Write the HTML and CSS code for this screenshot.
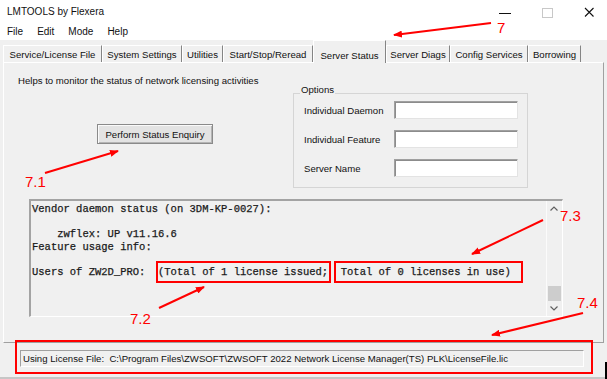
FILE: index.html
```html
<!DOCTYPE html>
<html lang="en">
<head>
    <meta charset="UTF-8">
    <title>LMTOOLS by Flexera</title>
    <link rel="stylesheet" href="styles.css">
</head>
<body>
    <!-- title bar -->
    <div class="titlebar">
        <span class="title">LMTOOLS by Flexera</span>
        <div class="controls">
            <svg width="42" height="22" viewBox="0 0 42 22"><line x1="15" y1="13.5" x2="27" y2="13.5" stroke="#111" stroke-width="1"/></svg>
            <svg width="42" height="22" viewBox="0 0 42 22"><rect x="16.5" y="8.5" width="10" height="9" fill="none" stroke="#c8c8c8" stroke-width="1"/></svg>
            <svg width="42" height="22" viewBox="0 0 42 22"><path d="M17 8 L25.5 16.5 M25.5 8 L17 16.5" stroke="#111" stroke-width="1.1"/></svg>
        </div>
    </div>

    <div class="menubar">
        <span>File</span>
        <span>Edit</span>
        <span>Mode</span>
        <span>Help</span>
    </div>

    <div class="tabs">
        <span class="tab">Service/License File</span>
        <span class="tab">System Settings</span>
        <span class="tab">Utilities</span>
        <span class="tab">Start/Stop/Reread</span>
        <span class="tab active">Server Status</span>
        <span class="tab">Server Diags</span>
        <span class="tab">Config Services</span>
        <span class="tab">Borrowing</span>
    </div>

    <div class="page">
        <div class="upper">
            <div class="left">
                <p class="intro">Helps to monitor the status of network licensing activities</p>
                <button class="btn">Perform Status Enquiry</button>
            </div>
            <fieldset class="options">
                <legend>Options</legend>
                <div class="fields">
                    <label>Individual Daemon</label>
                    <input type="text">
                    <label>Individual Feature</label>
                    <input type="text">
                    <label>Server Name</label>
                    <input type="text">
                </div>
            </fieldset>
        </div>

        <div class="output">
<pre class="listing">Vendor daemon status (on 3DM-KP-0027):

    zwflex: UP v11.16.6
Feature usage info:

Users of ZW2D_PRO:  (Total of 1 license issued;  Total of 0 licenses in use)</pre>
            <div class="scrollbar">
                <svg class="arrow" width="14" height="15" viewBox="0 0 14 15"><polyline points="3.5,9.5 7,6 10.5,9.5" fill="none" stroke="#606060" stroke-width="1.2"/></svg>
                <div class="track"><span class="thumb"></span></div>
                <svg class="arrow" width="14" height="15" viewBox="0 0 14 15"><polyline points="3.5,5.5 7,9 10.5,5.5" fill="none" stroke="#606060" stroke-width="1.2"/></svg>
            </div>
        </div>
    </div>

    <div class="statusbar">
        <div class="status-field">Using License File:  C:\Program Files\ZWSOFT\ZWSOFT 2022 Network License Manager(TS) PLK\LicenseFile.lic</div>
    </div>

    <!-- annotations -->
    <div class="mark mark-tab"></div>
    <div class="mark mark-issued"></div>
    <div class="mark mark-inuse"></div>
    <div class="mark mark-status"></div>

    <span class="note note-7">7</span>
    <span class="note note-71">7.1</span>
    <span class="note note-72">7.2</span>
    <span class="note note-73">7.3</span>
    <span class="note note-74">7.4</span>

    <svg class="arrows" width="607" height="379" viewBox="0 0 607 379">
        <defs>
            <marker id="head" markerWidth="9" markerHeight="7" refX="8" refY="3.5" orient="auto" markerUnits="userSpaceOnUse">
                <path d="M0,0 L9,3.5 L0,7 z" fill="#f00"/>
            </marker>
        </defs>
        <line x1="491" y1="23" x2="394" y2="35" marker-end="url(#head)"/>
        <line x1="45" y1="173" x2="118" y2="151" marker-end="url(#head)"/>
        <line x1="159" y1="308" x2="204" y2="287" marker-end="url(#head)"/>
        <line x1="543" y1="220" x2="472" y2="254" marker-end="url(#head)"/>
        <line x1="583" y1="313" x2="492" y2="335" marker-end="url(#head)"/>
    </svg>

    <div class="edge"></div>
</body>
</html>
```

FILE: styles.css
```css
/* window */
body {
    margin: 0;
    width: 607px;
    height: 379px;
    overflow: hidden;
    position: relative;
    background-color: #f0f0f0;
    font-family: "Liberation Sans", Arial, sans-serif;
    font-size: 9.6px;
    color: #111;
}

.titlebar {
    height: 22px;
    display: flex;
    align-items: center;
    background-color: #ffffff;
}

.title {
    padding-left: 7px;
    font-size: 10px;
}

.controls {
    margin-left: auto;
    margin-right: -3px;
    display: flex;
}

.controls svg {
    display: block;
}

.menubar {
    height: 18px;
    box-sizing: border-box;
    padding-top: 4px;
    display: flex;
    background-color: #ffffff;
    font-size: 10px;
    line-height: 12px;
}

.menubar span {
    padding: 0 7px;
}

/* tabs */
.tabs {
    height: 22px;
    display: flex;
    align-items: flex-end;
    padding-left: 3px;
}

.tab {
    box-sizing: border-box;
    height: 17px;
    padding-top: 1px;
    line-height: 16px;
    text-align: center;
    white-space: nowrap;
    border-top: 1px solid #ffffff;
    border-left: 1px solid #ffffff;
    border-right: 1px solid #858585;
}

.tab:nth-child(1) { width: 99px; }
.tab:nth-child(2) { width: 80px; }
.tab:nth-child(3) { width: 41px; }
.tab:nth-child(4) { width: 90px; }
.tab:nth-child(5) { width: 73px; }
.tab:nth-child(6) { width: 64px; }
.tab:nth-child(7) { width: 78px; }
.tab:nth-child(8) { width: 53px; }

.tab.active {
    height: 23px;
    padding-top: 7px;
    margin-bottom: -1px;
    position: relative;
    z-index: 1;
    background-color: #f0f0f0;
}

/* tab page */
.page {
    box-sizing: border-box;
    height: 281px;
    margin: 0 3px;
    border: 1px solid;
    border-color: #ffffff #a0a0a0 #a0a0a0 #ffffff;
}

.upper {
    display: flex;
}

.left {
    width: 289px;
}

.intro {
    margin: 0;
    padding: 12px 0 0 14px;
    line-height: 12px;
}

.btn {
    display: block;
    width: 116px;
    height: 20px;
    margin: 37px 0 0 93px;
    padding: 0;
    font: inherit;
    color: #111;
    background-color: #e3e3e3;
    border: 1px solid #8a8a8a;
    box-shadow: inset 1px 1px 0 #fafafa, inset -1px -1px 0 #b4b4b4;
}

.options {
    box-sizing: border-box;
    width: 235px;
    min-width: 0;
    margin: 21px 0 0;
    padding: 0;
    border: 1px solid #d5d5d5;
}

.options legend {
    margin-left: 6px;
    padding: 0 1px 6px;
    line-height: 12px;
}

.fields {
    display: grid;
    grid-template-columns: 90px 124px;
    row-gap: 11px;
    align-items: center;
    margin-top: -1px;
    padding: 0 9px 10px 10px;
}

.fields input {
    box-sizing: border-box;
    width: 124px;
    height: 18px;
    margin: 0;
    padding: 0;
    background-color: #ffffff;
    border: 1px solid;
    border-color: #a0a0a0 #e3e3e3 #e3e3e3 #a0a0a0;
    box-shadow: inset 1px 1px 0 #8c8c8c;
}

/* output listing */
.output {
    display: flex;
    box-sizing: border-box;
    width: 534px;
    height: 118px;
    margin: 11px 0 0 25px;
    border-style: solid;
    border-width: 2px 1px 1px 2px;
    border-color: #a3a3a3 #ffffff #ffffff #a3a3a3;
}

.listing {
    flex: 1;
    margin: 0;
    padding: 2px 0 0 1px;
    font-family: "Liberation Mono", "Courier New", monospace;
    font-size: 10.5px;
    line-height: 12.6px;
    color: #1a1a1a;
    -webkit-text-stroke: 0.25px #1a1a1a;
}

.scrollbar {
    width: 15px;
    display: flex;
    flex-direction: column;
    border-left: 1px solid #fbfbfb;
}

.arrow {
    display: block;
    flex: none;
}

.track {
    flex: 1;
    display: flex;
    flex-direction: column;
    justify-content: flex-end;
    align-items: center;
}

.thumb {
    width: 13px;
    height: 15px;
    background-color: #cdcdcd;
}

/* status bar */
.statusbar {
    height: 36px;
    box-sizing: border-box;
    padding: 7px 0 0 20px;
    border-bottom: 2px solid #c6c6c6;
}

.status-field {
    box-sizing: border-box;
    width: 564px;
    height: 17px;
    padding-left: 2px;
    line-height: 15px;
    white-space: pre;
    border: 1px solid;
    border-color: #a0a0a0 #ffffff #ffffff #a0a0a0;
}

/* red annotations */
.mark {
    position: absolute;
    box-sizing: border-box;
    border: 2px solid #ff0000;
}

.mark-tab { left: 313px; top: 40px; width: 72px; height: 23px; }
.mark-issued { left: 156px; top: 261px; width: 175px; height: 22px; }
.mark-inuse { left: 334px; top: 261px; width: 189px; height: 22px; }
.mark-status { left: 15px; top: 340px; width: 578px; height: 34px; }

.note {
    position: absolute;
    font-size: 15px;
    line-height: 15px;
    color: #ff0000;
}

.note-7 { left: 497px; top: 20px; }
.note-71 { left: 25px; top: 174px; }
.note-72 { left: 130px; top: 311px; }
.note-73 { left: 560px; top: 208px; }
.note-74 { left: 577px; top: 295px; }

.arrows {
    position: absolute;
    left: 0;
    top: 0;
    pointer-events: none;
}

.arrows line {
    stroke: #ff0000;
    stroke-width: 2;
}

.edge {
    position: absolute;
    left: 605px;
    top: 362px;
    width: 2px;
    height: 17px;
    background-color: #000000;
}
```
